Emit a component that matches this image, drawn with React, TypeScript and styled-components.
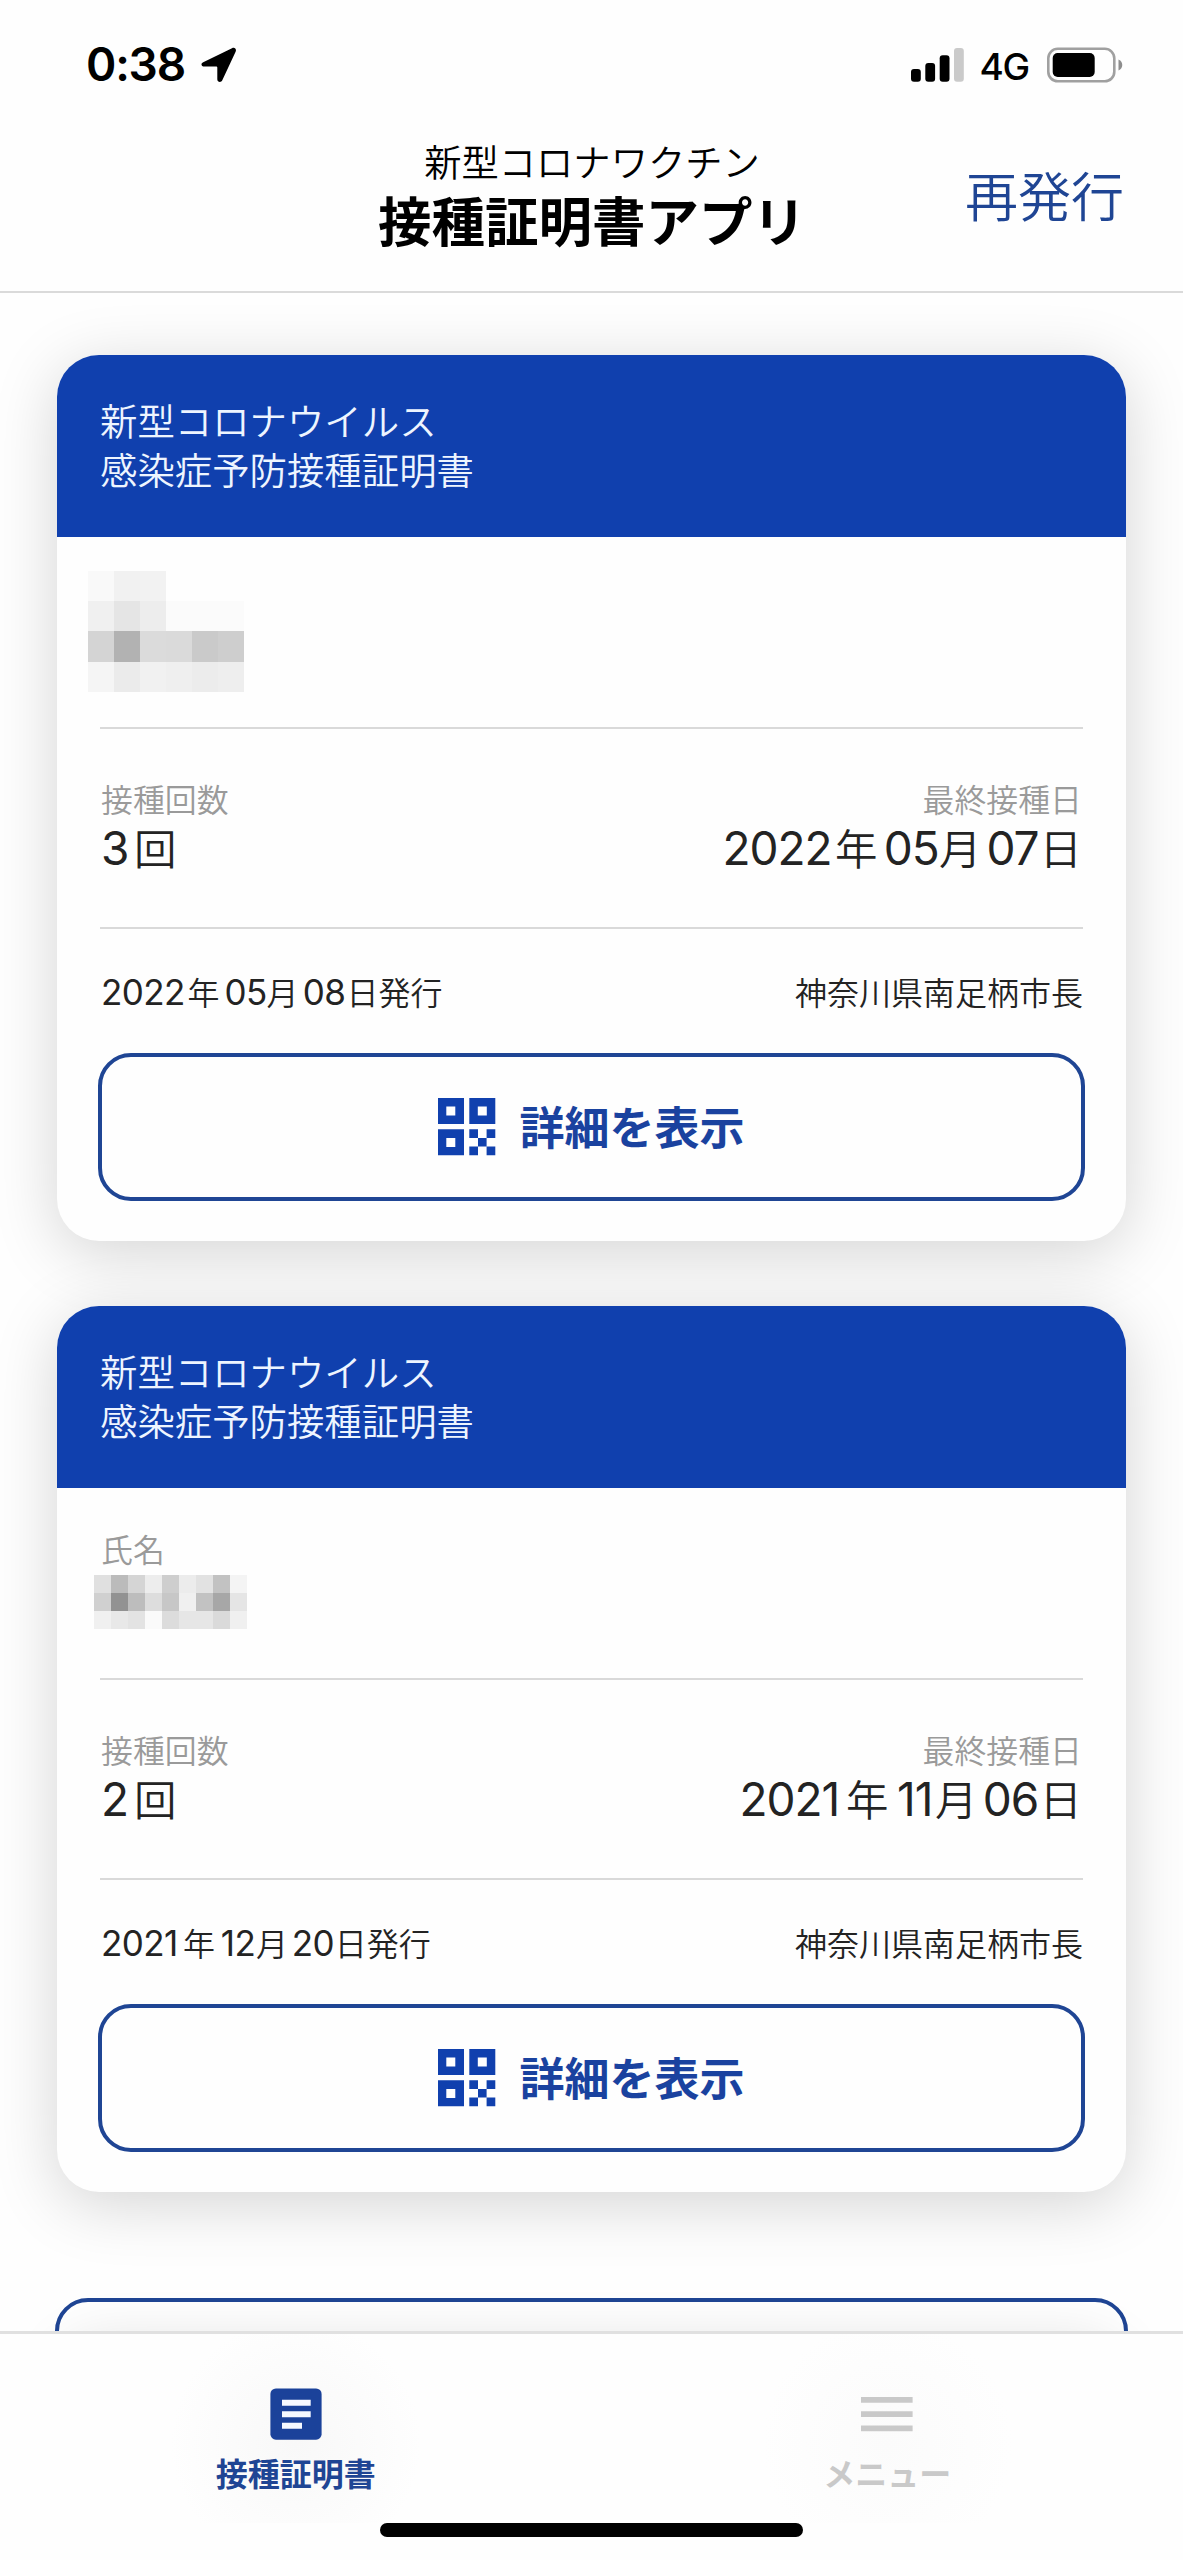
import React from "react";
import styled, { createGlobalStyle } from "styled-components";

const INK = "#232323";
const BLUE = "#1040ae";
const LINE_BLUE = "#1f4594";

const Global = createGlobalStyle`
  * { box-sizing: border-box; }
  html, body { margin: 0; padding: 0; background: #fefefe; }
  body {
    font-family: "Noto Sans CJK JP", sans-serif;
    -webkit-font-smoothing: antialiased;
  }
  button { font-family: inherit; margin: 0; padding: 0; cursor: pointer; }
`;

const Screen = styled.div`
  width: 1183px;
  height: 2560px;
  display: flex;
  flex-direction: column;
  background: #fefefe;
  overflow: hidden;
`;

const StatusBar = styled.div`
  height: 130px;
  flex: none;
  display: flex;
  justify-content: space-between;
  align-items: flex-start;
  padding: 36px 60px 0 86px;
`;

const StatusGroup = styled.div<{ $gap: number }>`
  display: flex;
  align-items: center;
  height: 57px;
  gap: ${(p) => p.$gap}px;
`;

const Clock = styled.span`
  font: 600 46px/57px Inter, sans-serif;
  letter-spacing: -1.2px;
  color: #000;
`;

const Network = styled.span`
  font: 500 37px/57px Inter, sans-serif;
  letter-spacing: -1.2px;
  padding-top: 3px;
  margin-right: 3px;
  color: #000;
`;

const Header = styled.header`
  flex: none;
  height: 163px;
  display: grid;
  grid-template-columns: 1fr auto 1fr;
  padding: 0 59px 0 60px;
  border-bottom: 2px solid #dadada;
  color: #000;
`;

const Titles = styled.div`
  grid-column: 2;
  display: flex;
  flex-direction: column;
  align-items: center;
  padding-top: 7px;
`;

const Subtitle = styled.div`
  font-size: 37.3px;
  font-weight: 350;
  line-height: 48px;
`;

const Title = styled.h1`
  margin: 2px 0 0;
  font-size: 53.5px;
  font-weight: 700;
  line-height: 64px;
`;

const Reissue = styled.button`
  justify-self: end;
  align-self: start;
  margin-top: 34px;
  border: 0;
  background: none;
  color: ${LINE_BLUE};
  font-size: 53px;
  font-weight: 350;
  line-height: 60px;
`;

const Content = styled.main`
  flex: 1;
  min-height: 0;
  overflow: hidden;
  padding: 62px 57px 0;
  display: flex;
  flex-direction: column;
`;

const Card = styled.article`
  flex: none;
  height: 886px;
  margin-bottom: 65px;
  border-radius: 42px;
  background: #fefefe;
  box-shadow: 0 12px 64px rgba(0, 0, 0, 0.17);
  display: flex;
  flex-direction: column;
`;

const CardHead = styled.div`
  height: 182px;
  border-radius: 42px 42px 0 0;
  padding: 41px 43px 0;
  background: ${BLUE};
  color: #eef5ff;
  font-size: 37.4px;
  font-weight: 350;
  line-height: 48.5px;
`;

const CardBody = styled.div`
  display: flex;
  flex-direction: column;
  padding: 0 41px;
`;

const NameSection = styled.section`
  height: 192px;
  margin: 0 2px;
  border-bottom: 2px solid #d9d9d9;
`;

const DoseSection = styled.section`
  height: 200px;
  margin: 0 2px;
  padding: 43px 1px 0 1px;
  border-bottom: 2px solid #d9d9d9;
  display: flex;
  justify-content: space-between;
`;

const Field = styled.div<{ $end?: boolean }>`
  display: flex;
  flex-direction: column;
  align-items: ${(p) => (p.$end ? "flex-end" : "flex-start")};
`;

const Label = styled.div`
  font-size: 31.9px;
  font-weight: 350;
  line-height: 52px;
  color: #9a9a9a;
`;

const Value = styled.div`
  margin-top: -2px;
  font-size: 42.500px;
  font-weight: 350;
  line-height: 50px;
  color: ${INK};
  white-space: nowrap;
`;

const Digits = styled.span<{ $size: number; $track: number; $w: number; $lead?: number }>`
  display: inline-block;
  width: ${(p) => p.$w}px;
  padding-left: ${(p) => p.$lead ?? 0}px;
  text-align: ${(p) => (p.$lead ? "center" : "left")};
  font-family: Inter, sans-serif;
  font-weight: 400;
  font-size: ${(p) => p.$size}px;
  letter-spacing: ${(p) => p.$track}px;
`;

const IssueRow = styled.div`
  height: 124px;
  padding: 36.500px 2px 0 3px;
  display: flex;
  justify-content: space-between;
  font-size: 32px;
  font-weight: 350;
  line-height: 50px;
  color: ${INK};
  white-space: nowrap;
`;

const DetailButton = styled.button`
  height: 148px;
  border: 4px solid ${LINE_BLUE};
  border-radius: 33px;
  background: #fefefe;
  display: flex;
  align-items: center;
  justify-content: center;
  gap: 23px;
  color: #1a429f;
  font-size: 45px;
  font-weight: 700;
  line-height: 60px;
`;

const ButtonText = styled.span`
  padding-bottom: 3px;
`;

const Mosaic = styled.div<{ $cols: number; $w: number; $h: number }>`
  display: grid;
  grid-template-columns: repeat(${(p) => p.$cols}, ${(p) => p.$w}px);
  grid-auto-rows: ${(p) => p.$h}px;
`;

const MosaicLarge = styled.div`
  padding-top: 34px;
  margin-left: -12px;
`;

const MosaicSmall = styled.div`
  margin: 9px 0 0 -7px;
`;

const NameField = styled.div`
  padding: 36px 0 0 1px;
  ${Label} { line-height: 50px; height: 42px; display: flex; align-items: center; padding-top: 6px; }
`;

const Cell = styled.span<{ $tone: string }>`
  background: #${(p) => p.$tone.repeat(3)};
`;

const AddButton = styled.button`
  position: relative;
  flex: none;
  height: 148px;
  margin: 41px -2px 0;
  border: 4px solid ${LINE_BLUE};
  border-radius: 33px;
  background: transparent;
  &::after {
    content: "";
    position: absolute;
    left: 0;
    right: 0;
    top: 40px;
    height: 200px;
    border-radius: 42px;
    box-shadow: 0 0 56px rgba(0, 0, 0, 0.12);
  }
`;

const TabBar = styled.nav`
  position: relative;
  z-index: 1;
  flex: none;
  height: 229px;
  border-top: 3px solid #e0e0e0;
  background: #fefefe;
  display: flex;
  flex-direction: column;
  align-items: center;
`;

const Tabs = styled.div`
  width: 100%;
  height: 189px;
  display: grid;
  grid-template-columns: 1fr 1fr;
`;

const Tab = styled.button<{ $active?: boolean }>`
  border: 0;
  background: radial-gradient(circle 125px at 50% 58%, ${(p) => (p.$active ? "#f8f8f8" : "#fbfbfb")}, #fefefe);
  display: flex;
  flex-direction: column;
  align-items: center;
  padding-top: 54px;
  gap: 10px;
  color: ${(p) => (p.$active ? LINE_BLUE : "#c9c9c9")};
  font-size: 32px;
  font-weight: 700;
  line-height: 44px;
  svg { display: block; }
`;

const HomeIndicator = styled.div`
  width: 423px;
  height: 14px;
  border-radius: 7px;
  background: #000;
`;

const LocationArrow = () => (
  <svg width="36" height="36" viewBox="0 0 36 36">
    <path d="M2.2 15.2 31 1.2c2.700-1.300 4.800.8 3.600 3.500L21.300 33.200c-1.200 2.700-5 2-5-1V20.500c0-.6-.3-.9-.9-.9H3.400c-3.200 0-4-3.100-1.200-4.400Z" fill="#000" />
  </svg>
);

const SignalIcon = () => (
  <svg width="53" height="34" viewBox="0 0 53 34">
    <rect x="0" y="21" width="9.800" height="12.800" rx="3" />
    <rect x="14.300" y="15" width="9.800" height="18.800" rx="3" />
    <rect x="28.700" y="7.300" width="9.800" height="26.500" rx="3" />
    <rect x="43" y="0" width="9.800" height="33.800" rx="3" fill="#cacaca" />
  </svg>
);

const BatteryIcon = () => (
  <svg width="76" height="36" viewBox="0 0 76 36">
    <rect x="1.300" y="1.800" width="66" height="32.500" rx="9.500" fill="none" stroke="#a0a0a0" strokeWidth="2.600" />
    <rect x="5.700" y="6" width="42" height="24" rx="5" />
    <path d="M71.500 12.500c5 2 5 9 0 11Z" fill="#8d8d8d" />
  </svg>
);

const QrIcon = () => (
  <svg width="58" height="58" viewBox="0 0 58 58" fill={BLUE} fillRule="evenodd">
    <path d="M0 0h26v26H0ZM8.300 8.500v9h9v-9Z" />
    <path d="M31.300 0h26v26h-26ZM39.800 8.500v9h9v-9Z" />
    <path d="M0 31.300h26v26H0ZM8.300 40v9h9v-9Z" />
    <path d="M31.300 31.300h8.700v8.700h-8.700ZM48.600 31.300h8.700v8.700h-8.700ZM40 40h8.600v8.600H40ZM31.300 48.600h8.700v8.700h-8.700ZM48.600 48.600h8.700v8.700h-8.700Z" />
  </svg>
);

const DocumentIcon = () => (
  <svg width="52" height="52" viewBox="0 0 52 52">
    <rect x="0.400" y="0.500" width="51.200" height="51.200" rx="5.500" fill="#1b429a" />
    <path d="M12 11.700h28.700v6H12ZM12 23.300h28.700v6H12ZM12 34.700h20v6H12Z" fill="#f6f9ff" />
  </svg>
);

const MenuIcon = () => (
  <svg width="52" height="52" viewBox="0 0 52 52" fill="#c9c9c9">
    <path d="M0 9h51.600v5.800H0ZM0 23.200h51.600V29H0ZM0 37.500h51.600v5.800H0Z" />
  </svg>
);

const LARGE_TILES = [
  "f9", "f1", "f2", "fe", "fe", "fe",
  "f0", "e5", "ed", "fb", "fb", "fb",
  "d4", "b2", "db", "da", "ca", "ce",
  "f5", "eb", "f1", "ef", "ec", "ee",
];

const SMALL_TILES = [
  "e0", "bb", "d5", "ed", "ce", "ec", "e2", "c2", "f4",
  "d0", "92", "bd", "dd", "c7", "f0", "c2", "a7", "e5",
  "f0", "e8", "e3", "fa", "dc", "e6", "e6", "da", "f0",
];

interface DateSpec {
  text: [string, string, string];
  widths: [number, number, number];
}

const BigDate = ({ text: [y, m, d], widths: [wy, wm, wd] }: DateSpec) => (
  <Value>
    <Digits $size={46} $track={-1} $w={wy}>{y}</Digits>年
    <Digits $size={46} $track={-1} $w={wm} $lead={6}>{m}</Digits>月
    <Digits $size={46} $track={-1} $w={wd} $lead={4}>{d}</Digits>日
  </Value>
);

const SmallDate = ({ text: [y, m, d], widths: [wy, wm, wd] }: DateSpec) => (
  <span>
    <Digits $size={35} $track={-0.6} $w={wy}>{y}</Digits>年
    <Digits $size={35} $track={-0.6} $w={wm} $lead={5}>{m}</Digits>月
    <Digits $size={35} $track={-0.6} $w={wd} $lead={3}>{d}</Digits>日発行
  </span>
);

interface CertificateProps {
  doses: string;
  last: DateSpec;
  issued: DateSpec;
  children: React.ReactNode;
}

const Certificate = ({ doses, last, issued, children }: CertificateProps) => (
  <Card>
    <CardHead>
      新型コロナウイルス
      <br />
      感染症予防接種証明書
    </CardHead>
    <CardBody>
      <NameSection>{children}</NameSection>
      <DoseSection>
        <Field>
          <Label>接種回数</Label>
          <Value>
            <Digits $size={46} $track={0} $w={33}>{doses}</Digits>回
          </Value>
        </Field>
        <Field $end>
          <Label>最終接種日</Label>
          <BigDate {...last} />
        </Field>
      </DoseSection>
      <IssueRow>
        <SmallDate {...issued} />
        <span>神奈川県南足柄市長</span>
      </IssueRow>
      <DetailButton>
        <QrIcon />
        <ButtonText>詳細を表示</ButtonText>
      </DetailButton>
    </CardBody>
  </Card>
);

export default function App() {
  return (
    <>
      <Global />
      <Screen>
        <StatusBar>
          <StatusGroup $gap={16}>
            <Clock>0:38</Clock>
            <LocationArrow />
          </StatusGroup>
          <StatusGroup $gap={15}>
            <SignalIcon />
            <Network>4G</Network>
            <BatteryIcon />
          </StatusGroup>
        </StatusBar>
        <Header>
          <Titles>
            <Subtitle>新型コロナワクチン</Subtitle>
            <Title>接種証明書アプリ</Title>
          </Titles>
          <Reissue>再発行</Reissue>
        </Header>
        <Content>
          <Certificate
            doses="3"
            last={{ text: ["2022", "05", "07"], widths: [112.5, 61.5, 58] }}
            issued={{ text: ["2022", "05", "08"], widths: [86.5, 47, 48] }}
          >
            <MosaicLarge>
              <Mosaic $cols={6} $w={26.05} $h={30.2}>
                {LARGE_TILES.map((t, i) => <Cell key={i} $tone={t} />)}
              </Mosaic>
            </MosaicLarge>
          </Certificate>
          <Certificate
            doses="2"
            last={{ text: ["2021", "11", "06"], widths: [106.5, 46.5, 62] }}
            issued={{ text: ["2021", "12", "20"], widths: [82, 41, 46.6] }}
          >
            <NameField>
              <Label>氏名</Label>
              <MosaicSmall>
                <Mosaic $cols={9} $w={17.05} $h={17.9}>
                  {SMALL_TILES.map((t, i) => <Cell key={i} $tone={t} />)}
                </Mosaic>
              </MosaicSmall>
            </NameField>
          </Certificate>
          <AddButton aria-label="追加" />
        </Content>
        <TabBar>
          <Tabs>
            <Tab $active>
              <DocumentIcon />
              接種証明書
            </Tab>
            <Tab>
              <MenuIcon />
              メニュー
            </Tab>
          </Tabs>
          <HomeIndicator />
        </TabBar>
      </Screen>
    </>
  );
}
